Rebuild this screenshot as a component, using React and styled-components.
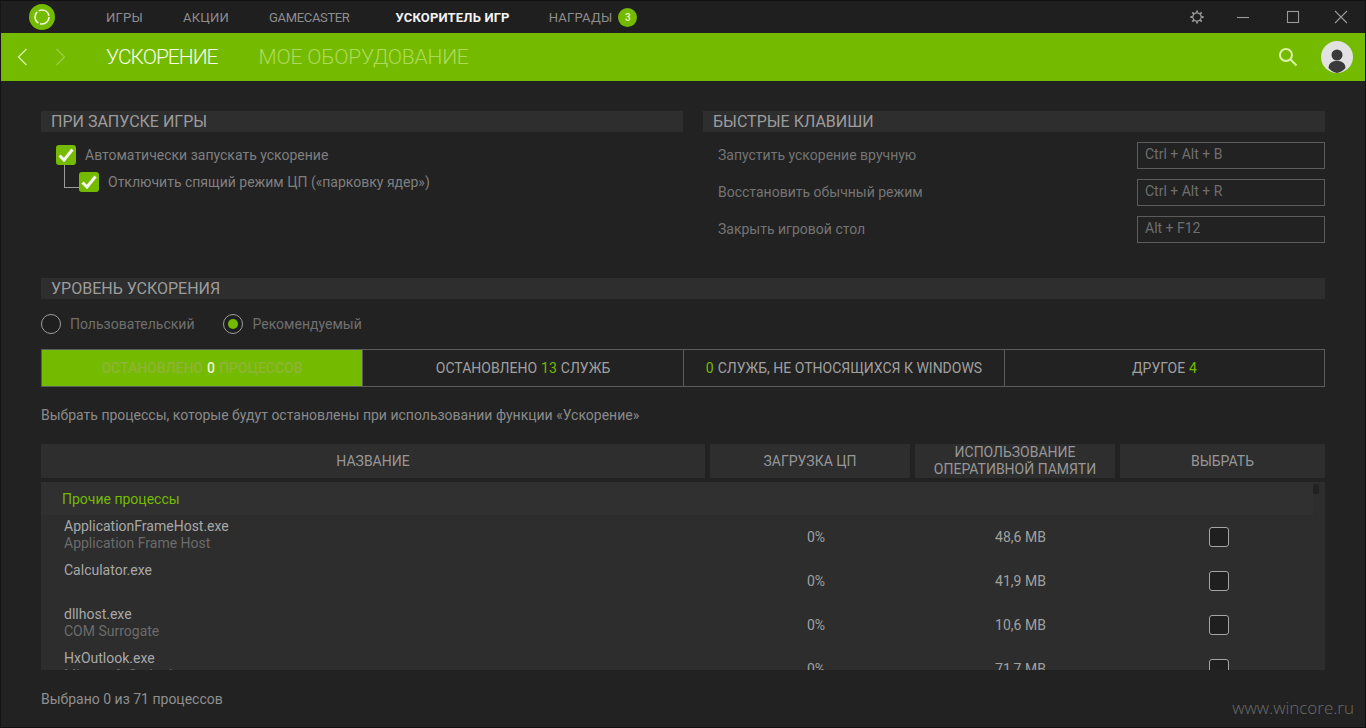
import React from "react";
import styled, { createGlobalStyle } from "styled-components";

const GREEN = "#74bb00";

const GlobalStyle = createGlobalStyle`
  html, body {
    margin: 0;
    padding: 0;
    background: #222222;
    overflow: hidden;
  }
  * {
    box-sizing: border-box;
  }
`;

const Page = styled.div`
  position: relative;
  width: 1366px;
  height: 728px;
  background: #222222;
  border: 1px solid #111111;
  border-left-color: #151515;
  font-family: Roboto, "Liberation Sans", sans-serif;
  color: #8a8a8a;
  overflow: hidden;
  display: flex;
  flex-direction: column;
`;

const TitleBar = styled.div`
  height: 32px;
  flex: none;
  background: #1f1f1f;
  display: flex;
  align-items: center;
  padding: 0 17px 0 28px;
`;
const Logo = styled.svg`
  width: 26px;
  height: 26px;
  margin-right: 51px;
  flex: none;
`;
const NavItem = styled.div`
  font-size: 13px;
  letter-spacing: ${(p) => (p.$tight ? -0.35 : p.$active ? 0.18 : 0.25)}px;
  margin-right: ${(p) => (p.$tight ? 46 : p.$active ? 39 : 40)}px;
  color: ${(p) => (p.$active ? "#f2f2f2" : "#8e8e8e")};
  font-weight: ${(p) => (p.$active ? 700 : 400)};
  display: flex;
  align-items: center;
  gap: 6px;
`;
const Badge = styled.span`
  width: 19px;
  height: 19px;
  border-radius: 50%;
  background: ${GREEN};
  color: #e8f5c8;
  font-size: 10px;
  font-weight: 500;
  display: flex;
  align-items: center;
  justify-content: center;
  letter-spacing: 0;
`;
const WindowButtons = styled.div`
  margin-left: auto;
  display: flex;
  align-items: center;
`;
const WinIcon = styled.svg`
  width: 14px;
  height: 14px;
  display: block;
  margin-left: ${(p) => p.$gap || 0}px;
`;

const GreenBar = styled.div`
  height: 48px;
  flex: none;
  background: ${GREEN};
  display: flex;
  align-items: center;
  padding: 0 12px 0 16px;
`;
const Chevron = styled.svg`
  width: 11px;
  height: 18px;
  margin-right: ${(p) => (p.$dim ? 40 : 27)}px;
  flex: none;
  opacity: ${(p) => (p.$dim ? 0.35 : 0.9)};
`;
const HeadTab = styled.div`
  font-size: 21px;
  font-weight: 300;
  margin-right: 41px;
  letter-spacing: ${(p) => (p.$active ? -1 : -0.2)}px;
  color: ${(p) => (p.$active ? "#f7fbe8" : "#aeda5c")};
`;
const Spacer = styled.div`
  flex: 1;
`;
const SearchIcon = styled.svg`
  width: 20px;
  height: 20px;
  margin-right: 23px;
`;
const Avatar = styled.svg`
  width: 32px;
  height: 32px;
`;

const Content = styled.div`
  flex: 1;
  padding: 30px 40px 0 40px;
  display: flex;
  flex-direction: column;
  min-height: 0;
`;
const TopColumns = styled.div`
  display: grid;
  grid-template-columns: 642px 622px;
  column-gap: 20px;
  height: 167px;
  flex: none;
`;
const SectionHeader = styled.div`
  height: 21px;
  background: #2e2e2e;
  padding-left: 10px;
  font-size: 16px;
  line-height: 21px;
  color: #9c9c9c;
`;
const CheckRow = styled.div`
  position: relative;
  display: flex;
  align-items: center;
  height: 20px;
  gap: 9px;
  font-size: 14px;
  color: #7f7f7f;
  margin-left: ${(p) => p.$left}px;
  margin-top: ${(p) => p.$top}px;
`;
const CheckBox = styled.span`
  width: 20px;
  height: 20px;
  flex: none;
  border-radius: 3px;
  display: flex;
  align-items: center;
  justify-content: center;
  background: ${(p) => (p.$on ? GREEN : "#1f1f1f")};
  border: ${(p) => (p.$on ? "none" : "1px solid #a5a5a5")};
`;
const TreeLine = styled.span`
  position: absolute;
  left: -15px;
  top: -7px;
  width: 15px;
  height: 23px;
  border-left: 1px solid #9a9a9a;
  border-bottom: 1px solid #9a9a9a;
`;
const KeyRow = styled.div`
  display: flex;
  align-items: flex-start;
  justify-content: space-between;
  height: 27px;
  margin-top: 10px;
  padding-left: 15px;
  font-size: 14px;
  line-height: 27px;
  color: #747474;
`;
const KeyBox = styled.div`
  width: 188px;
  height: 27px;
  border: 1px solid #5c5c5c;
  padding-left: 7px;
  font-size: 14px;
  line-height: 23px;
  color: #6e6e6e;
`;
const RadioRow = styled.div`
  display: flex;
  align-items: center;
  height: 20px;
  margin-top: 15px;
  gap: 28px;
`;
const RadioItem = styled.div`
  display: flex;
  align-items: center;
  gap: 9px;
  font-size: 14px;
  color: #6f6f6f;
`;
const RadioCircle = styled.span`
  width: 20px;
  height: 20px;
  margin-right: ${(p) => (p.$on ? 1 : 0)}px;
  border-radius: 50%;
  border: 1px solid #9d9d9d;
  background: #1f1f1f;
  display: flex;
  align-items: center;
  justify-content: center;
  &::after {
    content: "";
    display: ${(p) => (p.$on ? "block" : "none")};
    width: 10px;
    height: 10px;
    border-radius: 50%;
    background: ${GREEN};
  }
`;
const Tabs = styled.div`
  display: grid;
  grid-template-columns: 321px 321px 321px 1fr;
  height: 38px;
  margin-top: 15px;
  border: 1px solid #5c5c5c;
  flex: none;
`;
const TabCell = styled.div`
  display: flex;
  align-items: center;
  justify-content: center;
  gap: 4px;
  font-size: 14px;
  color: ${(p) => (p.$active ? "#8fb338" : "#a0a0a0")};
  background: ${(p) => (p.$active ? GREEN : "transparent")};
  font-weight: ${(p) => (p.$active ? 500 : 400)};
  &:not(:last-child) {
    border-right: 1px solid #5c5c5c;
  }
`;
const Count = styled.span`
  color: ${(p) => (p.$light ? "#f2f8d8" : GREEN)};
`;
const Description = styled.div`
  margin-top: 19px;
  font-size: 14px;
  line-height: 18px;
  color: #8a8a8a;
`;
const TableHead = styled.div`
  display: grid;
  grid-template-columns: 664px 200px 200px 205px;
  column-gap: 5px;
  height: 33px;
  margin-top: 20px;
  flex: none;
`;
const HeadCell = styled.div`
  background: #2e2e2e;
  display: flex;
  align-items: center;
  justify-content: center;
  text-align: center;
  font-size: 14px;
  line-height: 17px;
  color: #979797;
`;
const ListPanel = styled.div`
  position: relative;
  height: 188px;
  margin-top: 5px;
  background: #2d2d2d;
  overflow: hidden;
  flex: none;
`;
const GroupRow = styled.div`
  height: 33px;
  margin-right: 12px;
  background: #303030;
  padding-left: 21px;
  font-size: 14px;
  line-height: 35px;
  color: ${GREEN};
`;
const ScrollThumb = styled.span`
  position: absolute;
  right: 6px;
  top: 2px;
  width: 6px;
  height: 10px;
  border-radius: 2px;
  background: #222222;
`;
const ProcessRow = styled.div`
  display: grid;
  grid-template-columns: 675px 200px 209px 188px;
  height: 44px;
  font-size: 14px;
`;
const ProcessName = styled.div`
  padding-left: 23px;
  padding-top: 3px;
  line-height: 17px;
  color: #a8a8a8;
`;
const ProcessSub = styled.div`
  color: #6b6b6b;
`;
const ValueCell = styled.div`
  display: flex;
  align-items: center;
  justify-content: center;
  color: #a0a0a0;
`;
const Footer = styled.div`
  margin-top: 20px;
  font-size: 14px;
  line-height: 18px;
  color: #8f8f8f;
`;
const Watermark = styled.div`
  position: absolute;
  right: 11px;
  bottom: 8px;
  font-family: "Open Sans", "Liberation Sans", sans-serif;
  font-weight: 300;
  font-size: 17px;
  color: #6b6b6b;
`;

const Tick = () => (
  <svg width="16" height="14" viewBox="0 0 16 14">
    <path d="M1.5 7.5 L6 12 L14.5 1.5" fill="none" stroke="#f6f6f0" strokeWidth="3" />
  </svg>
);

const processes = [
  { name: "ApplicationFrameHost.exe", sub: "Application Frame Host", cpu: "0%", mem: "48,6 MB" },
  { name: "Calculator.exe", sub: "", cpu: "0%", mem: "41,9 MB" },
  { name: "dllhost.exe", sub: "COM Surrogate", cpu: "0%", mem: "10,6 MB" },
  { name: "HxOutlook.exe", sub: "Microsoft Outlook", cpu: "0%", mem: "71,7 MB" },
];

const shortcuts = [
  ["Запустить ускорение вручную", "Ctrl + Alt + B"],
  ["Восстановить обычный режим", "Ctrl + Alt + R"],
  ["Закрыть игровой стол", "Alt + F12"],
];

export default function App() {
  return (
    <Page>
      <GlobalStyle />
      <TitleBar>
        <Logo viewBox="0 0 26 26">
          <circle cx="13" cy="13" r="13" fill={GREEN} />
          <circle cx="13" cy="13" r="7" fill="none" stroke="#f0f6e0" strokeWidth="1.6" strokeDasharray="13 1.7" />
        </Logo>
        <NavItem>ИГРЫ</NavItem>
        <NavItem>АКЦИИ</NavItem>
        <NavItem $tight>GAMECASTER</NavItem>
        <NavItem $active>УСКОРИТЕЛЬ ИГР</NavItem>
        <NavItem>
          НАГРАДЫ <Badge>3</Badge>
        </NavItem>
        <WindowButtons>
          <WinIcon viewBox="0 0 14 14" fill="none" stroke="#9a9a9a" strokeWidth="1.2">
            <circle cx="7" cy="7" r="4.2" />
            <path strokeWidth="1.8" d="M7 .4v2.2M7 11.4v2.2M.4 7h2.2M11.4 7h2.2M2.3 2.3l1.5 1.5M10.2 10.2l1.5 1.5M2.3 11.7l1.5-1.5M10.2 3.8l1.5-1.5" />
          </WinIcon>
          <WinIcon $gap={32} viewBox="0 0 14 14" fill="none" stroke="#9a9a9a" strokeWidth="1.1">
            <path d="M1 7.5h12" />
          </WinIcon>
          <WinIcon $gap={36} viewBox="0 0 14 14" fill="none" stroke="#9a9a9a" strokeWidth="1.1">
            <rect x="1.5" y="1.5" width="11" height="11" />
          </WinIcon>
          <WinIcon $gap={34} viewBox="0 0 14 14" fill="none" stroke="#9a9a9a" strokeWidth="1.1">
            <path d="M1 1l12 12M13 1L1 13" />
          </WinIcon>
        </WindowButtons>
      </TitleBar>

      <GreenBar>
        <Chevron viewBox="0 0 11 18" fill="none" stroke="#e6f3c4" strokeWidth="1.3">
          <path d="M9.5 1 L1.5 9 L9.5 17" />
        </Chevron>
        <Chevron $dim viewBox="0 0 11 18" fill="none" stroke="#e6f3c4" strokeWidth="1.3">
          <path d="M1.5 1 L9.5 9 L1.5 17" />
        </Chevron>
        <HeadTab $active>УСКОРЕНИЕ</HeadTab>
        <HeadTab>МОЕ ОБОРУДОВАНИЕ</HeadTab>
        <Spacer />
        <SearchIcon viewBox="0 0 20 20" fill="none" stroke="#dcf0aa" strokeWidth="2">
          <circle cx="8" cy="8" r="6" />
          <path d="M12.5 12.5 L18.5 18.5" />
        </SearchIcon>
        <Avatar viewBox="0 0 32 32">
          <circle cx="16" cy="16" r="16" fill="#e2e2e2" />
          <circle cx="16" cy="14" r="5.5" fill="#3a3a3a" />
          <path d="M7.5 27 C8 21.5 11.5 20 16 20 C20.5 20 24 21.5 24.5 27 A14 14 0 0 1 16 32 A14 14 0 0 1 7.5 27 Z" fill="#3a3a3a" />
        </Avatar>
      </GreenBar>

      <Content>
        <TopColumns>
          <div>
            <SectionHeader>ПРИ ЗАПУСКЕ ИГРЫ</SectionHeader>
            <CheckRow $left={15} $top={13}>
              <CheckBox $on>
                <Tick />
              </CheckBox>
              Автоматически запускать ускорение
            </CheckRow>
            <CheckRow $left={38} $top={7}>
              <TreeLine />
              <CheckBox $on>
                <Tick />
              </CheckBox>
              Отключить спящий режим ЦП («парковку ядер»)
            </CheckRow>
          </div>
          <div>
            <SectionHeader>БЫСТРЫЕ КЛАВИШИ</SectionHeader>
            {shortcuts.map(([label, keys]) => (
              <KeyRow key={label}>
                {label}
                <KeyBox>{keys}</KeyBox>
              </KeyRow>
            ))}
          </div>
        </TopColumns>

        <SectionHeader>УРОВЕНЬ УСКОРЕНИЯ</SectionHeader>
        <RadioRow>
          <RadioItem>
            <RadioCircle />
            Пользовательский
          </RadioItem>
          <RadioItem>
            <RadioCircle $on />
            Рекомендуемый
          </RadioItem>
        </RadioRow>

        <Tabs>
          <TabCell $active>
            <span>ОСТАНОВЛЕНО</span> <Count $light>0</Count> <span>ПРОЦЕССОВ</span>
          </TabCell>
          <TabCell>
            <span>ОСТАНОВЛЕНО</span> <Count>13</Count> <span>СЛУЖБ</span>
          </TabCell>
          <TabCell>
            <Count>0</Count> <span>СЛУЖБ, НЕ ОТНОСЯЩИХСЯ К WINDOWS</span>
          </TabCell>
          <TabCell>
            <span>ДРУГОЕ</span> <Count>4</Count>
          </TabCell>
        </Tabs>

        <Description>Выбрать процессы, которые будут остановлены при использовании функции «Ускорение»</Description>

        <TableHead>
          <HeadCell>НАЗВАНИЕ</HeadCell>
          <HeadCell>ЗАГРУЗКА ЦП</HeadCell>
          <HeadCell>
            ИСПОЛЬЗОВАНИЕ
            <br />
            ОПЕРАТИВНОЙ ПАМЯТИ
          </HeadCell>
          <HeadCell>ВЫБРАТЬ</HeadCell>
        </TableHead>

        <ListPanel>
          <ScrollThumb />
          <GroupRow>Прочие процессы</GroupRow>
          {processes.map((p) => (
            <ProcessRow key={p.name}>
              <ProcessName>
                {p.name}
                <ProcessSub>{p.sub}</ProcessSub>
              </ProcessName>
              <ValueCell>{p.cpu}</ValueCell>
              <ValueCell>{p.mem}</ValueCell>
              <ValueCell>
                <CheckBox />
              </ValueCell>
            </ProcessRow>
          ))}
        </ListPanel>

        <Footer>Выбрано 0 из 71 процессов</Footer>
      </Content>

      <Watermark>www.wincore.ru</Watermark>
    </Page>
  );
}
